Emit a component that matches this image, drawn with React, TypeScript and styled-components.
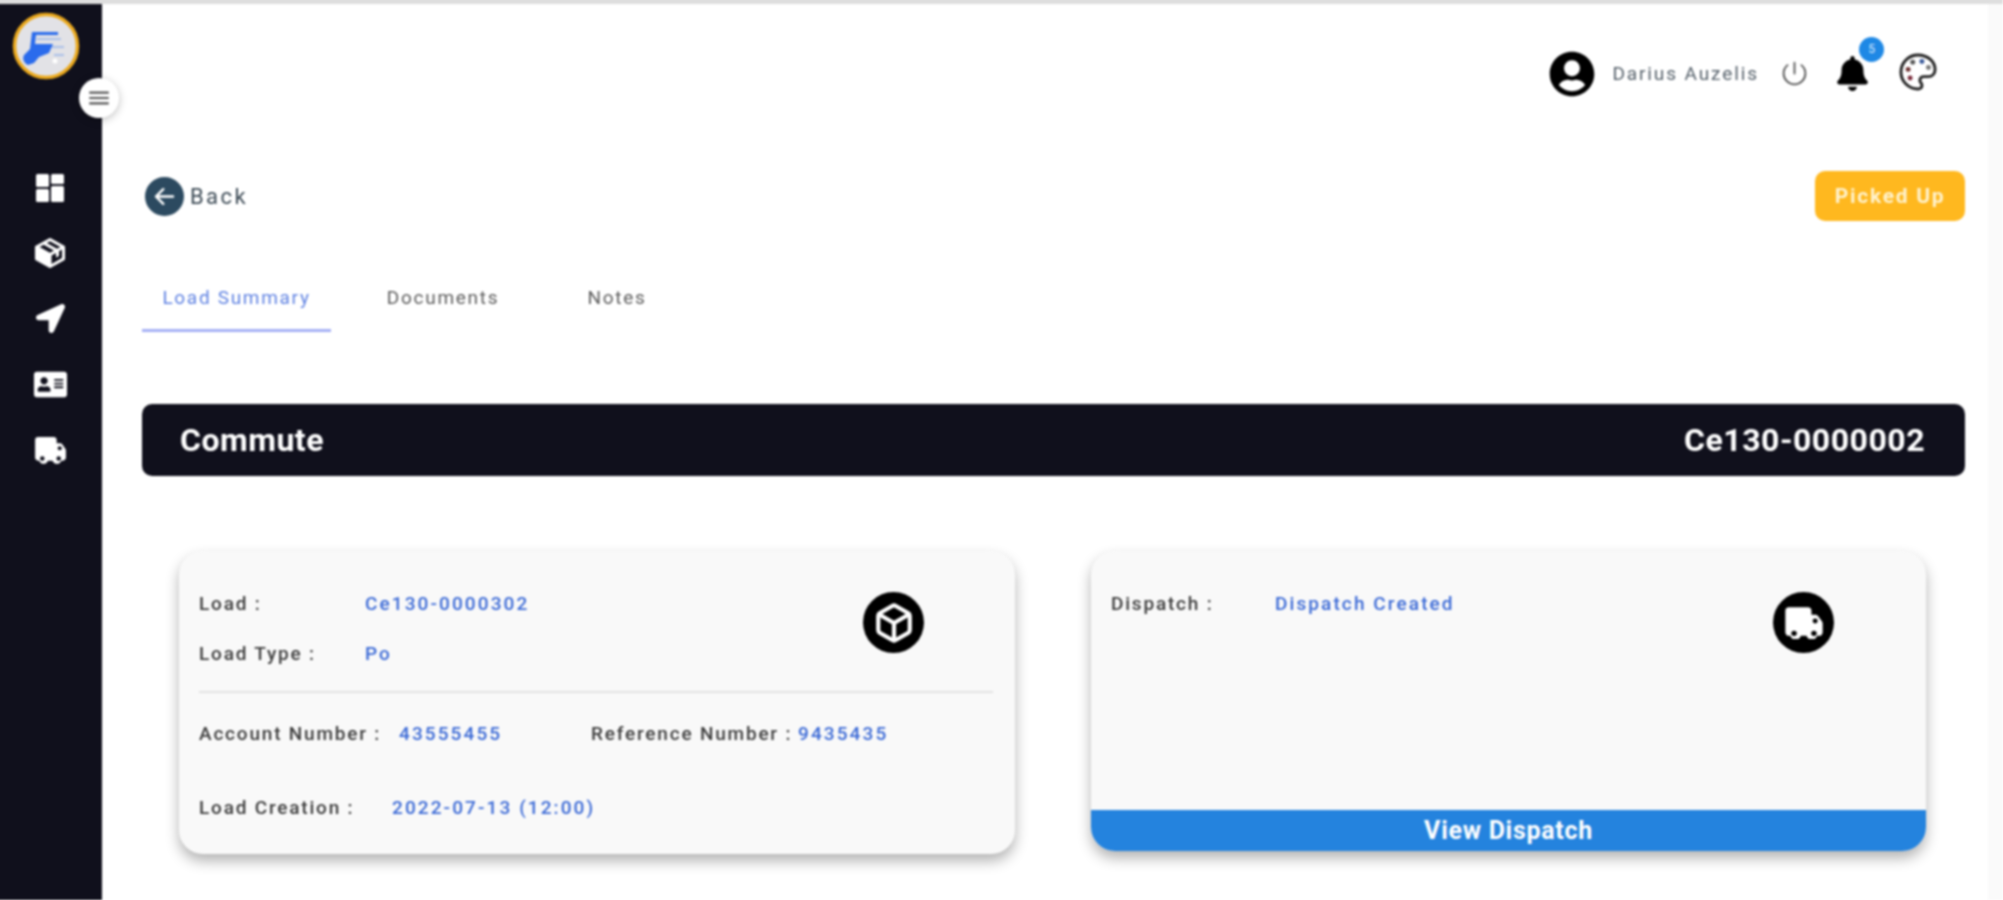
import styled, { createGlobalStyle } from "styled-components";
import { BsArrowLeftCircleFill } from "react-icons/bs";
import { FaAddressCard, FaBell, FaLocationArrow, FaUserCircle } from "react-icons/fa";
import { IoPowerOutline } from "react-icons/io5";
import { MdMenu } from "react-icons/md";
import { BiSolidPackage } from "react-icons/bi";
import { Box } from "lucide-react";

const GlobalStyle = createGlobalStyle`
  html, body {
    margin: 0;
    padding: 0;
    overflow: hidden;
    background: #fff;
  }
  body {
    font-family: Roboto, "Liberation Sans", sans-serif;
  }
`;

// reaches past the window edges so the blur doesn't fade out at the sides
const Page = styled.div`
  display: flex;
  flex-direction: column;
  width: 2007px;
  height: 903px;
  margin: -3px 0 0 -4px;
  overflow: hidden;
  filter: blur(0.8px);
`;

const TopStrip = styled.div`
  height: 7px;
  flex: none;
  background: #dedede;
`;

const Shell = styled.div`
  display: flex;
  flex: 1;
  min-height: 0;
`;

const Sidebar = styled.aside`
  position: relative;
  width: 106px;
  box-sizing: border-box;
  padding-left: 4px;
  flex: none;
  display: flex;
  flex-direction: column;
  align-items: center;
  background: #10101c;
`;

const Logo = styled.svg`
  width: 68px;
  height: 68px;
  margin: 8px 10px 0 0;
`;

const ToggleButton = styled.div`
  position: absolute;
  top: 74px;
  left: 83px;
  width: 40px;
  height: 40px;
  border-radius: 50%;
  display: flex;
  align-items: center;
  justify-content: center;
  color: #555;
  background: #fff;
  box-shadow: 0 2px 8px rgba(0, 0, 0, 0.25);
`;

const NavList = styled.nav`
  display: flex;
  flex-direction: column;
  align-items: center;
  margin-top: 75px;
  margin-right: 2px;
  color: #fff;
`;

const NavItem = styled.div`
  width: 36px;
  height: 65.500px;
  display: flex;
  align-items: center;
  justify-content: center;

  & svg {
    display: block;
  }
`;

const Main = styled.main`
  flex: 1;
  min-width: 0;
  padding: 0 23px 0 40px;
`;

const Gutter = styled.div`
  width: 15px;
  flex: none;
  background: #fafafa;
`;

const TopBar = styled.header`
  display: flex;
  align-items: center;
  justify-content: flex-end;
  height: 46px;
  margin-top: 46px;
  padding-right: 26px;
`;

const Avatar = styled(FaUserCircle)`
  width: 46px;
  height: 46px;
  margin-top: 2px;
  color: #000;
`;

const UserName = styled.span`
  margin-left: 17px;
  font-size: 19px;
  letter-spacing: 1.9px;
  color: #55606a;
`;

const PowerIcon = styled(IoPowerOutline)`
  width: 29px;
  height: 29px;
  margin-left: 21px;
  color: #555;
`;

const BellWrap = styled.div`
  position: relative;
  display: flex;
  margin-left: 26px;
`;

const Badge = styled.span`
  position: absolute;
  top: -19px;
  right: -14px;
  width: 25px;
  height: 25px;
  border-radius: 50%;
  display: flex;
  align-items: center;
  justify-content: center;
  font-size: 12px;
  color: #dcecff;
  background: #1e88e5;
`;

const PaletteIcon = styled.svg`
  width: 42px;
  height: 42px;
  margin: -3px 0 0 27px;
`;

const ActionRow = styled.div`
  display: flex;
  align-items: center;
  justify-content: space-between;
  height: 50px;
  margin-top: 75px;
  margin-bottom: 1px;
`;

const BackLink = styled.div`
  display: flex;
  align-items: center;
  gap: 6px;
  margin-left: 3px;
  font-size: 22px;
  letter-spacing: 2.4px;
  color: #3c4a55;

  & svg {
    width: 39px;
    height: 39px;
    color: #2c4a60;
  }
`;

const StatusButton = styled.button`
  width: 150px;
  height: 50px;
  border: 0;
  border-radius: 10px;
  font-family: inherit;
  font-size: 21px;
  font-weight: 700;
  letter-spacing: 1.7px;
  color: #fff3cf;
  background: #ffb81f;
`;

const Tabs = styled.div`
  display: flex;
  margin-top: 45px;
`;

const Tab = styled.div<{ $active?: boolean; $width: number }>`
  width: ${(p) => p.$width}px;
  height: 66px;
  box-sizing: border-box;
  display: flex;
  align-items: center;
  justify-content: center;
  font-size: 19px;
  letter-spacing: 1.7px;
  color: ${(p) => (p.$active ? "#5f82e2" : "#5c5c5c")};
  border-bottom: 3px solid ${(p) => (p.$active ? "#a5b0f5" : "transparent")};
`;

const TitleBar = styled.div`
  display: flex;
  align-items: center;
  justify-content: space-between;
  height: 72px;
  margin-top: 72px;
  padding: 0 40px 0 38px;
  border-radius: 10px;
  font-size: 32px;
  font-weight: 700;
  letter-spacing: 0.5px;
  color: #fff;
  background: #10101c;
`;

const Cards = styled.div`
  display: grid;
  grid-template-columns: 836px 835px;
  gap: 76px;
  align-items: start;
  margin-top: 75px;
  padding-left: 37px;
`;

const Card = styled.section<{ $height: number }>`
  display: flex;
  flex-direction: column;
  height: ${(p) => p.$height}px;
  overflow: hidden;
  border-radius: 24px;
  background: #f9f9f9;
  box-shadow: 0 7px 14px rgba(0, 0, 0, 0.3);
`;

const CardBody = styled.div`
  flex: 1;
  padding: 41px 22px 0 20px;
`;

const CardTop = styled.div`
  display: flex;
  justify-content: space-between;
  align-items: flex-start;
`;

const Stack = styled.div`
  display: flex;
  flex-direction: column;
  gap: 26px;
`;

const Row = styled.div<{ $top?: number }>`
  display: flex;
  margin-top: ${(p) => p.$top ?? 0}px;
`;

const Field = styled.div<{ $width?: number }>`
  display: flex;
  flex: ${(p) => (p.$width ? "none" : "1")};
  width: ${(p) => (p.$width ? `${p.$width}px` : "auto")};
  line-height: 24px;
  font-size: 19px;
  font-weight: 500;
  letter-spacing: 1.800px;
  white-space: nowrap;
`;

const Label = styled.span<{ $width: number }>`
  width: ${(p) => p.$width}px;
  flex: none;
  color: #3c3c3c;
`;

const Value = styled.span`
  letter-spacing: 2.100px;
  color: #3a69d6;
`;

const IconBadge = styled.div`
  width: 61px;
  height: 61px;
  margin-right: 69px;
  border-radius: 50%;
  display: flex;
  align-items: center;
  justify-content: center;
  color: #fff;
  background: #000;
`;

const Divider = styled.hr`
  height: 2px;
  margin: 25px 0 0;
  border: 0;
  background: #e2e2e2;
`;

const CardFooter = styled.div`
  flex: none;
  height: 41px;
  display: flex;
  align-items: center;
  justify-content: center;
  font-size: 25px;
  font-weight: 700;
  letter-spacing: 0.7px;
  color: #fff;
  background: #2483de;
`;

const TruckBadge = styled(IconBadge)`
  margin-right: 70px;
`;

type GlyphProps = {
  size: number;
  inner: string;
};

function TruckGlyph({ size, inner }: GlyphProps) {
  return (
    <svg width={size} height={size * 0.84} viewBox="0 0 32 27" fill="currentColor">
      <path d="M4 1h15c2 0 3 1 3 3v3h3c1 0 2 .5 2.6 1.4l3 4.2c.3.5.4 1 .4 1.6V21c0 1.500-1 3-3 3h-1.500a4.500 4.500 0 0 1-8.500 0h-4.500a4.500 4.500 0 0 1-8.500 0H4c-2 0-3-1.500-3-3V4c0-2 1-3 3-3z" />
      <circle cx="8" cy="22" r="2.200" fill={inner} />
      <circle cx="24" cy="22" r="2.200" fill={inner} />
      <circle cx="25" cy="12" r="2" fill={inner} />
    </svg>
  );
}

function DashGlyph() {
  return (
    <svg width="28" height="28" viewBox="0 0 28 28" fill="currentColor">
      <rect x="0" y="0" width="13" height="13" rx="1.500" />
      <rect x="15" y="0" width="13" height="10" rx="1.500" />
      <rect x="0" y="15" width="13" height="13" rx="1.500" />
      <rect x="15" y="12" width="13" height="16" rx="1.500" />
    </svg>
  );
}

export default function App() {
  return (
    <Page>
      <GlobalStyle />
      <TopStrip />
      <Shell>
        <Sidebar>
          <Logo viewBox="0 0 68 68">
            <circle cx="34" cy="34" r="31.500" fill="#e2e2e6" stroke="#eba91c" strokeWidth="3.500" />
            <path d="M20 20h26v3H24l-1 9h18l-4 9-10 4-5 6-6 2c-4-2-6-6-4-10l6-6z" fill="#2a6bec" />
            <path d="M25 27h24M40 35h12M42 43h10" stroke="#a9bfe8" strokeWidth="2" fill="none" />
            <circle cx="43" cy="49" r="2.500" fill="#fff" />
          </Logo>
          <ToggleButton>
            <MdMenu size={26} />
          </ToggleButton>
          <NavList>
            <NavItem>
              <DashGlyph />
            </NavItem>
            <NavItem>
              <BiSolidPackage size={36} />
            </NavItem>
            <NavItem>
              <FaLocationArrow size={29} />
            </NavItem>
            <NavItem>
              <FaAddressCard size={33} />
            </NavItem>
            <NavItem>
              <TruckGlyph size={33} inner="#10101c" />
            </NavItem>
          </NavList>
        </Sidebar>
        <Main>
          <TopBar>
            <Avatar />
            <UserName>Darius Auzelis</UserName>
            <PowerIcon />
            <BellWrap>
              <FaBell size={35} color="#000" />
              <Badge>5</Badge>
            </BellWrap>
            <PaletteIcon viewBox="0 0 32 32">
              <path
                d="M16 3C8.800 3 3 8.800 3 16s5.800 13 13 13c1.800 0 3-1.200 3-2.800 0-.8-.3-1.400-.8-2-.5-.5-.8-1.100-.8-1.900 0-1.600 1.300-2.800 3-2.800h3.300C27 19.500 29 17 29 14 29 7.900 23.200 3 16 3z"
                fill="none"
                stroke="#222"
                strokeWidth="2.200"
              />
              <circle cx="8.500" cy="14" r="1.900" fill="#6b2f2f" />
              <circle cx="10" cy="20.500" r="1.900" fill="#7a2a3a" />
              <circle cx="12" cy="8.500" r="1.900" fill="#555" />
              <circle cx="19" cy="8" r="1.900" fill="#3a5a9a" />
              <circle cx="24" cy="12.500" r="1.900" fill="#777" />
            </PaletteIcon>
          </TopBar>
          <ActionRow>
            <BackLink>
              <BsArrowLeftCircleFill />
              Back
            </BackLink>
            <StatusButton>Picked Up</StatusButton>
          </ActionRow>
          <Tabs>
            <Tab $active $width={189}>Load Summary</Tab>
            <Tab $width={224}>Documents</Tab>
            <Tab $width={124}>Notes</Tab>
          </Tabs>
          <TitleBar>
            <span>Commute</span>
            <span>Ce130-0000002</span>
          </TitleBar>
          <Cards>
            <Card $height={303}>
              <CardBody>
                <CardTop>
                  <Stack>
                    <Field>
                      <Label $width={166}>Load :</Label>
                      <Value>Ce130-0000302</Value>
                    </Field>
                    <Field>
                      <Label $width={166}>Load Type :</Label>
                      <Value>Po</Value>
                    </Field>
                  </Stack>
                  <IconBadge>
                    <Box size={42} strokeWidth={2.4} />
                  </IconBadge>
                </CardTop>
                <Divider />
                <Row $top={29}>
                  <Field $width={392}>
                    <Label $width={200}>Account Number :</Label>
                    <Value>43555455</Value>
                  </Field>
                  <Field>
                    <Label $width={207}>Reference Number :</Label>
                    <Value>9435435</Value>
                  </Field>
                </Row>
                <Row $top={50}>
                  <Field>
                    <Label $width={193}>Load Creation :</Label>
                    <Value>2022-07-13 (12:00)</Value>
                  </Field>
                </Row>
              </CardBody>
            </Card>
            <Card $height={300}>
              <CardBody>
                <CardTop>
                  <Field>
                    <Label $width={164}>Dispatch :</Label>
                    <Value>Dispatch Created</Value>
                  </Field>
                  <TruckBadge>
                    <TruckGlyph size={40} inner="#000" />
                  </TruckBadge>
                </CardTop>
              </CardBody>
              <CardFooter>View Dispatch</CardFooter>
            </Card>
          </Cards>
        </Main>
        <Gutter />
      </Shell>
    </Page>
  );
}
